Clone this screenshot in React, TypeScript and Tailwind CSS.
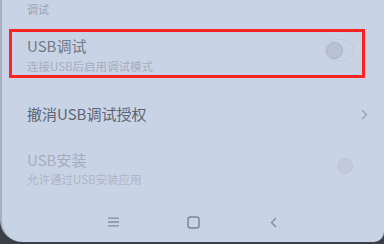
import React from "react";

export default function App() {
  return (
    <div className="w-[384px] h-[244px] bg-[#3b3f47] overflow-hidden">
      <div className="relative w-[384px] h-[242px] bg-[#c9d3e6] rounded-bl-[22px] rounded-br-[10px] border-l-[2px] border-[#a9b1be] font-['Noto_Sans_CJK_SC','Noto_Sans',sans-serif] flex flex-col">
        <div className="pl-[25px] pt-[2px] text-[11px] leading-[14px] text-[#9aa2b1]">调试</div>
        <div className="ml-[7px] mt-[13px] w-[356px] h-[49px] border-[3px] border-[#ff2323] flex items-start justify-between pl-[15px] pr-[8px]">
          <div className="flex flex-col pt-[4px]">
            <div className="text-[15px] leading-[20px] text-[#737a88]">USB调试</div>
            <div className="mt-[3px] text-[11.5px] leading-[14px] text-[#a6aebe]">连接USB后启用调试模式</div>
          </div>
          <div className="mt-[7px] w-[30px] h-[22px] rounded-full border border-[#c2cbdc] flex items-center pl-[1px]">
            <div className="w-[17px] h-[17px] rounded-full bg-[#b9c1d3] border border-[#a9b1c3]" />
          </div>
        </div>
        <div className="pl-[25px] pr-[16px] mt-[24px] flex items-center justify-between h-[24px]">
          <div className="text-[15px] leading-[20px] text-[#5f6572]">撤消USB调试授权</div>
          <svg width="7" height="11" viewBox="0 0 7 11">
            <path d="M1 1 L5.5 5.5 L1 10" fill="none" stroke="#9aa2b2" strokeWidth="1.3" />
          </svg>
        </div>
        <div className="pl-[25px] pr-[31px] mt-[24px] flex items-start justify-between">
          <div className="flex flex-col">
            <div className="text-[15px] leading-[20px] text-[#a5adbd]">USB安装</div>
            <div className="mt-[2px] text-[11.5px] leading-[14px] text-[#adb5c5]">允许通过USB安装应用</div>
          </div>
          <div className="mt-[8px] w-[16px] h-[16px] rounded-full bg-[#c1c9da] border border-[#bcc4d5]" />
        </div>
        <div className="mt-auto mb-[13px] flex items-center justify-center h-[14px]">
          <div className="w-[80px] flex justify-center pl-[1px]">
            <svg width="13" height="10" viewBox="0 0 13 10">
              <path d="M1 1.2 H12 M1 5 H12 M1 8.8 H12" stroke="#858c9a" strokeWidth="1.3" />
            </svg>
          </div>
          <div className="w-[80px] flex justify-center">
            <svg width="13" height="13" viewBox="0 0 13 13">
              <rect x="1" y="1" width="11" height="11" rx="2.5" fill="none" stroke="#7f8695" strokeWidth="1.5" />
            </svg>
          </div>
          <div className="w-[80px] flex justify-center">
            <svg width="7" height="11" viewBox="0 0 7 11">
              <path d="M6 1 L1.5 5.5 L6 10" fill="none" stroke="#858c9a" strokeWidth="1.4" />
            </svg>
          </div>
        </div>
      </div>
    </div>
  );
}
